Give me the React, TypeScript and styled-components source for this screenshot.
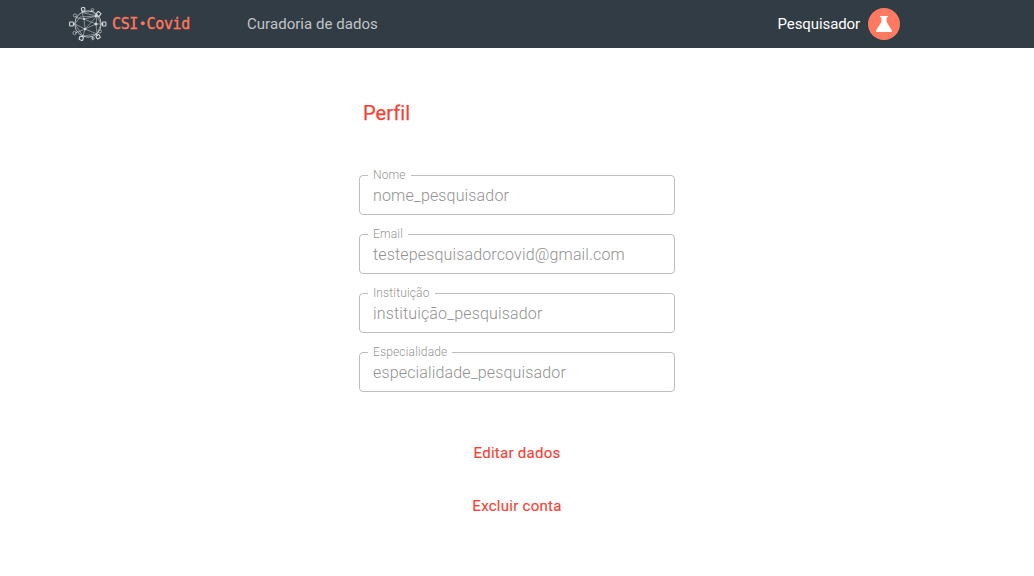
import React from "react";
import styled, { createGlobalStyle } from "styled-components";

const GlobalStyle = createGlobalStyle`
  * { box-sizing: border-box; }
  body {
    margin: 0;
    background: #fff;
    font-family: Roboto, "Liberation Sans", sans-serif;
  }
`;

const Header = styled.header`
  display: flex;
  align-items: center;
  height: 48px;
  padding: 0 134px 0 68px;
  background: #323c44;
`;

const Brand = styled.a`
  display: flex;
  align-items: center;
  width: 179px;
`;

const BrandMark = styled.svg`
  flex: none;
  width: 40px;
  height: 36px;
`;

const BrandName = styled.span`
  display: flex;
  align-items: center;
  margin-left: 4px;
  color: #ff785f;
  font: 15px/20px "DejaVu Sans Mono", monospace;
  letter-spacing: -0.36px;
  -webkit-text-stroke: 0.35px #ff785f;
`;

const BrandDot = styled.span`
  width: 8.6px;
  font-size: 12px;
  text-align: center;
`;

const NavLink = styled.a`
  color: #c1c4c7;
  font-size: 15px;
  line-height: 20px;
  letter-spacing: 0.04px;
`;

const UserMenu = styled.div`
  display: flex;
  align-items: center;
  gap: 8px;
  margin-left: auto;
  color: #fff;
  font-size: 15px;
  line-height: 20px;
  letter-spacing: -0.1px;
`;

const Avatar = styled.span`
  display: flex;
  align-items: center;
  justify-content: center;
  width: 32px;
  height: 32px;
  border-radius: 50%;
  background: #ff7a60;
`;

const Profile = styled.main`
  display: flex;
  flex-direction: column;
  width: 316px;
  margin: 0 auto;
  padding-top: 53px;
`;

const Title = styled.h1`
  margin: 0 0 50px 4px;
  color: #f44336;
  font-size: 20px;
  font-weight: 400;
  line-height: 24px;
  letter-spacing: 0.1px;
  -webkit-text-stroke: 0.25px #f44336;
`;

const FieldList = styled.div`
  display: flex;
  flex-direction: column;
  gap: 19px;
`;

const Field = styled.fieldset`
  min-width: 0;
  height: 40px;
  margin: 0;
  padding: 0 8px;
  border: 1px solid #bdbdbd;
  border-radius: 4px;
`;

const FieldLabel = styled.legend`
  height: 1px;
  padding: 0 5px;
  color: #959595;
  font-size: 12px;
  font-weight: 300;
  line-height: 1px;
  letter-spacing: 0.15px;
`;

const FieldValue = styled.div`
  padding: 0 5px;
  color: #929292;
  font-size: 16px;
  font-weight: 300;
  line-height: 40px;
  letter-spacing: 0.15px;
`;

const Actions = styled.div`
  display: flex;
  flex-direction: column;
  align-items: center;
  gap: 29px;
  margin-top: 49px;
`;

const TextButton = styled.button`
  padding: 0;
  border: 0;
  background: none;
  color: #f44336;
  font: 400 15px/24px Roboto, sans-serif;
  letter-spacing: 0.27px;
  -webkit-text-stroke: 0.15px #f44336;
`;

const fields = [
  { label: "Nome", value: "nome_pesquisador" },
  { label: "Email", value: "testepesquisadorcovid@gmail.com" },
  { label: "Instituição", value: "instituição_pesquisador" },
  { label: "Especialidade", value: "especialidade_pesquisador" },
];

function VirusMark() {
  return (
    <BrandMark viewBox="0 0 40 36" fill="none" stroke="#d5d9dc" strokeWidth="0.9" aria-hidden="true">
      <circle cx="20" cy="18" r="13.2" strokeWidth="0.8" />
      <g strokeWidth="0.65" opacity="0.8">
        <path d="M14 6.5 29 10 33 18 29 28 15 30 7 18 12 11 29 10 17 23 7 18" />
        <path d="M14 6.5 16 13 17 23 29 28 28 18 16 13 9 12" />
        <path d="M16 13 29 10 28 18 17 23 15 30" />
        <path d="M17 23 10 26 M28 18 33 18 M14 6.5 24 5.5 29 10" />
      </g>
      <path d="M14.5 6.5V4.5M28 10 30 8.5M7 18H5M33 18h2.5M15 29l-1 2M28 28l2 2M9 12 7.5 10.5M9 26l-1.5 1M24 31l1 2M23 6l1-2" />
      <g strokeWidth="1.1">
        <rect x="13.5" y="1.6" width="3.3" height="3.5" rx="0.7" transform="rotate(-8 15 3)" />
        <rect x="28.5" y="5.8" width="3.8" height="4" rx="0.7" transform="rotate(35 30 8)" />
        <rect x="1.6" y="16" width="3.8" height="4" rx="0.7" />
        <rect x="34.5" y="16" width="3.4" height="4" rx="0.7" />
        <rect x="11.5" y="30.5" width="3.7" height="3.5" rx="0.7" transform="rotate(20 13 32)" />
        <rect x="28.5" y="29" width="3.5" height="3.5" rx="0.7" transform="rotate(-30 30 31)" />
      </g>
      <circle cx="7" cy="9.5" r="1.6" strokeWidth="0.6" />
      <circle cx="6.5" cy="27" r="1.6" strokeWidth="0.6" />
      <circle cx="25" cy="32.5" r="1.3" strokeWidth="0.6" />
      <circle cx="24.5" cy="3.8" r="1.3" strokeWidth="0.6" />
      <circle cx="32" cy="25.5" r="1.5" strokeWidth="0.6" />
      <g fill="#d5d9dc" stroke="none">
        <circle cx="17" cy="23" r="1.3" />
        <circle cx="28" cy="18" r="1.5" />
        <circle cx="16" cy="13" r="1" />
        <circle cx="28" cy="10" r="1.3" />
      </g>
    </BrandMark>
  );
}

export default function App() {
  return (
    <>
      <GlobalStyle />
      <Header>
        <Brand>
          <VirusMark />
          <BrandName>
            CSI<BrandDot>•</BrandDot>Covid
          </BrandName>
        </Brand>
        <NavLink>Curadoria de dados</NavLink>
        <UserMenu>
          <span>Pesquisador</span>
          <Avatar>
            <svg width="16" height="16" viewBox="0 0 16 16" fill="#fff" aria-hidden="true">
              <path d="M4 0h8v1.3h-1.4V6l5.2 8.3c.5.9 0 1.7-1 1.7H1.2c-1 0-1.5-.8-1-1.7L5.4 6V1.3H4z" />
            </svg>
          </Avatar>
        </UserMenu>
      </Header>
      <Profile>
        <Title>Perfil</Title>
        <FieldList>
          {fields.map((field) => (
            <Field key={field.label}>
              <FieldLabel>{field.label}</FieldLabel>
              <FieldValue>{field.value}</FieldValue>
            </Field>
          ))}
        </FieldList>
        <Actions>
          <TextButton type="button">Editar dados</TextButton>
          <TextButton type="button">Excluir conta</TextButton>
        </Actions>
      </Profile>
    </>
  );
}
